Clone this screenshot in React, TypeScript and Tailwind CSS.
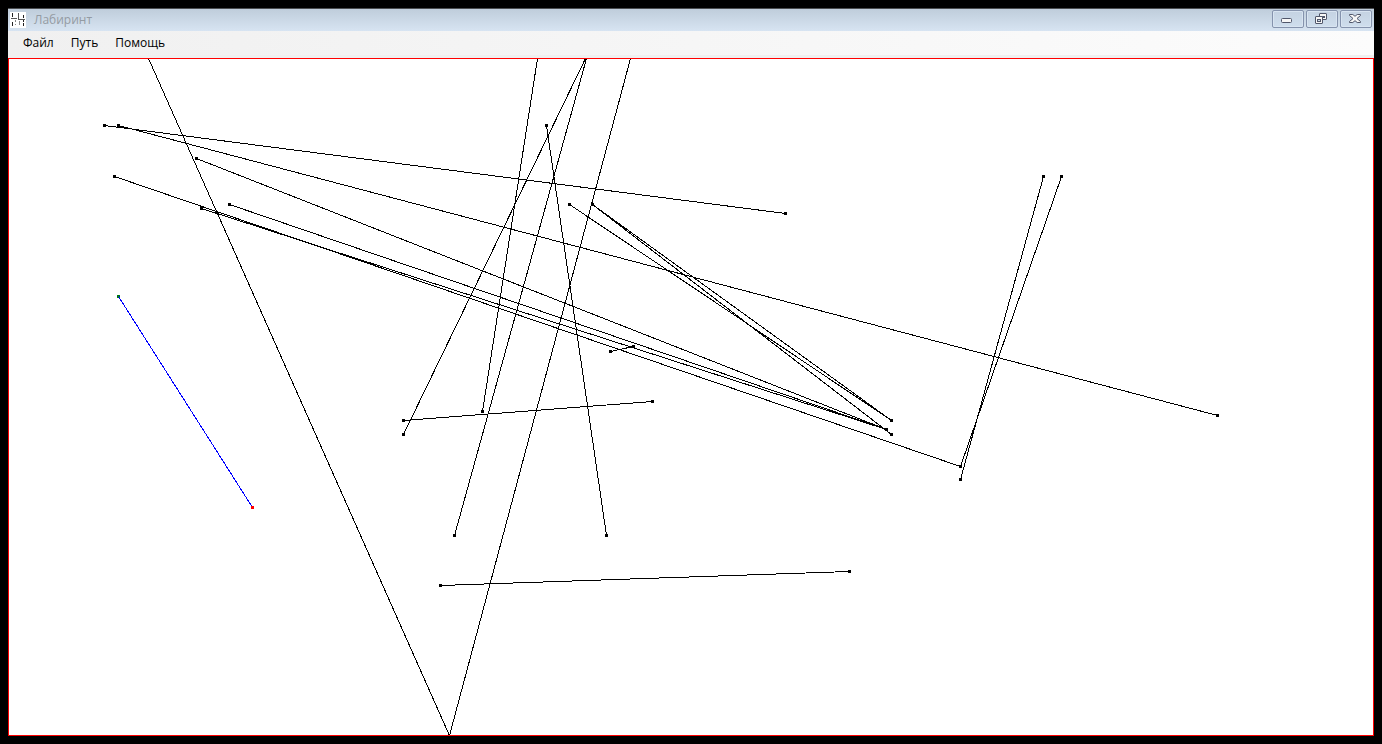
import type { ReactNode } from "react";

type Segment = { from: [number, number]; to: [number, number]; open?: boolean };

const walls: Segment[] = [
  { from: [96, 67], to: [777, 155] },
  { from: [110, 67], to: [1209, 357] },
  { from: [188, 100], to: [878, 371] },
  { from: [193, 150], to: [878, 371] },
  { from: [221, 146], to: [878, 371] },
  { from: [106, 118], to: [952, 408] },
  { from: [561, 146], to: [883, 362] },
  { from: [584, 146], to: [883, 362] },
  { from: [584, 146], to: [883, 376] },
  { from: [538, 67], to: [598, 477] },
  { from: [474, 353], to: [529, 0], open: true },
  { from: [395, 376], to: [577, 0], open: true },
  { from: [446, 477], to: [578, 0], open: true },
  { from: [602, 293], to: [625, 288] },
  { from: [395, 362], to: [644, 343] },
  { from: [432, 527], to: [841, 513] },
  { from: [952, 421], to: [1035, 118] },
  { from: [952, 408], to: [1053, 118] },
];

const borderWalls: Segment[] = [
  { from: [140, 0], to: [441, 677] },
  { from: [622, 0], to: [441, 677] },
];

function Line({ from, to, color }: Segment & { color: string }) {
  return (
    <line
      x1={from[0] + 0.5}
      y1={from[1] + 0.5}
      x2={to[0] + 0.5}
      y2={to[1] + 0.5}
      stroke={color}
      strokeWidth="1"
    />
  );
}

function Dot({ at, color }: { at: [number, number]; color: string }) {
  return <rect x={at[0] - 1} y={at[1] - 1} width="3" height="3" fill={color} />;
}

function Maze() {
  return (
    <svg
      role="img"
      aria-label="Лабиринт"
      className="absolute -left-px -top-px h-full w-full overflow-visible"
      shapeRendering="crispEdges"
    >
      {borderWalls.map((s, i) => (
        <Line key={i} {...s} color="#000" />
      ))}
      {walls.map((s, i) => (
        <g key={i}>
          <Line {...s} color="#000" />
          <Dot at={s.from} color="#000" />
          {!s.open && <Dot at={s.to} color="#000" />}
        </g>
      ))}
      <Dot at={[110, 238]} color="#008000" />
      <Line from={[110, 238]} to={[244, 449]} color="#00f" />
      <Dot at={[244, 449]} color="#f00" />
    </svg>
  );
}

function AppIcon() {
  return (
    <svg width="16" height="16" viewBox="0 0 16 16" shapeRendering="crispEdges" aria-hidden="true">
      <rect width="16" height="16" fill="#fff" />
      <path d="M2 1h1v4H2zM2 10h1v4H2zM13 3h1v3H13zM13 8h1v2H13zM13 11h1v3H13z" fill="#222" />
      <path d="M1 6h6v1H1zM8 1h1v7H8zM9 7h6v1H9z" fill="#555" />
      <path d="M5 8h1v2H5zM9 9h1v4H9zM5 12h1v1H5z" fill="#888" />
    </svg>
  );
}

function CaptionButton({ label, children }: { label: string; children: ReactNode }) {
  return (
    <button
      type="button"
      aria-label={label}
      className="flex h-[18px] w-8 items-center justify-center rounded-[2px] border border-[#8593ad] bg-linear-to-b from-[#c4d2e2] to-[#cfdeed] pr-0.5 shadow-[inset_0_0_0_1px_#d8e4f1]"
    >
      {children}
    </button>
  );
}

function MinimizeGlyph() {
  return (
    <svg width="12" height="12" viewBox="0 0 12 12" aria-hidden="true">
      <rect x="0.5" y="5.5" width="10" height="4" rx="1" fill="#f6f6f6" stroke="#50566a" />
    </svg>
  );
}

function RestoreGlyph() {
  return (
    <svg width="12" height="12" viewBox="0 0 12 12" aria-hidden="true">
      <rect x="4.5" y="0.5" width="7" height="6" rx="0.5" fill="#f6f6f6" stroke="#50566a" />
      <rect x="7.5" y="3.5" width="2" height="1" fill="#c9d7e6" stroke="#50566a" />
      <rect x="0.5" y="3.5" width="7" height="7" rx="0.5" fill="#f6f6f6" stroke="#50566a" />
      <rect x="2.5" y="6.5" width="3" height="2" fill="#c9d7e6" stroke="#50566a" />
    </svg>
  );
}

function CloseGlyph() {
  return (
    <svg width="12" height="10" viewBox="0 0 12 10" aria-hidden="true">
      <path
        d="M0.5 0.5H3.8L6 2.3L8.2 0.5H11.5V1.5L8 4.5L11.5 7.5V8.5H8.2L6 6.7L3.8 8.5H0.5V7.5L4 4.5L0.5 1.5Z"
        fill="#f6f6f6"
        stroke="#50566a"
      />
    </svg>
  );
}

const menu = ["Файл", "Путь", "Помощь"];

export default function App() {
  return (
    <div className="flex h-screen flex-col bg-black p-2 font-['Open_Sans','Noto_Sans',sans-serif] text-xs text-black">
      <header className="flex h-[23px] shrink-0 items-center gap-2 border-t border-[#4a4d50] bg-linear-to-b from-[#bfcddb] to-[#d7e4f2] pl-0.5 pr-0.5">
        <AppIcon />
        <h1 className="flex-1 text-[#949ba3]">Лабиринт</h1>
        <div className="flex gap-0.5 self-start pt-px">
          <CaptionButton label="Свернуть">
            <MinimizeGlyph />
          </CaptionButton>
          <CaptionButton label="Восстановить">
            <RestoreGlyph />
          </CaptionButton>
          <CaptionButton label="Закрыть">
            <CloseGlyph />
          </CaptionButton>
        </div>
      </header>
      <nav className="flex h-[27px] shrink-0 items-center gap-[17px] border-b-[3px] border-[#f0f0f0] bg-linear-to-r from-[#f0f0f0] to-[#fcfcfc] pl-[15px]">
        {menu.map((item) => (
          <button key={item} type="button">
            {item}
          </button>
        ))}
      </nav>
      <main className="relative min-h-0 flex-1 overflow-hidden border border-[#f00] bg-white">
        <Maze />
      </main>
    </div>
  );
}
